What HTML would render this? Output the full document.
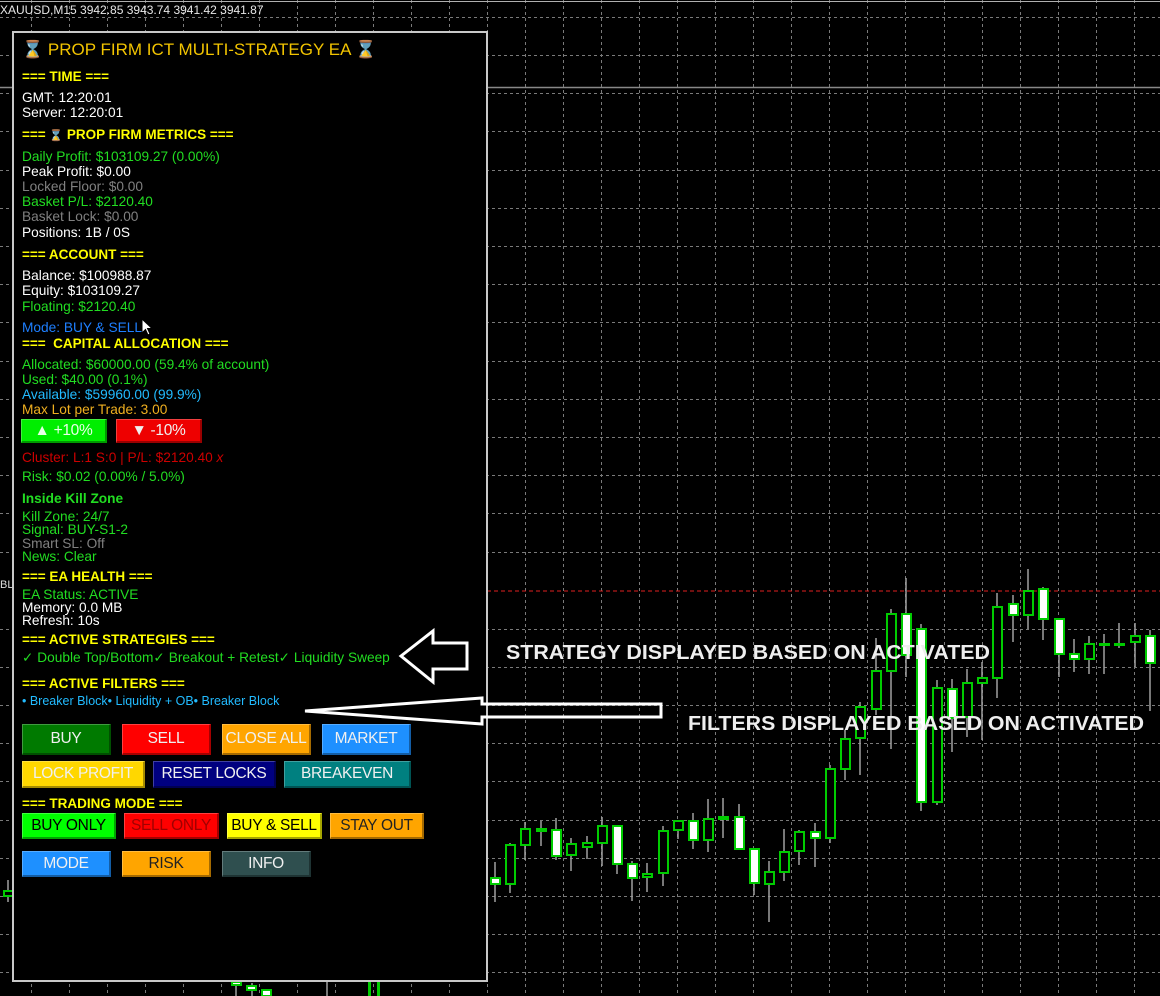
<!DOCTYPE html>
<html><head><meta charset="utf-8"><style>
*{margin:0;padding:0;box-sizing:border-box}
body{width:1160px;height:996px;background:#000;position:relative;overflow:hidden;font-family:"Liberation Sans",Arial,sans-serif}
svg.bg{position:absolute;left:0;top:0}
#panel{position:absolute;left:12px;top:31px;width:476px;height:951px;background:#000;border:2px solid #c8c8c8}
.t{position:absolute;left:22px;font-size:13.7px;line-height:15px;white-space:nowrap;color:#fff}
.h{font-weight:bold;color:#ffff00;font-size:13.5px}
.g{color:#22dd22}.w{color:#fff}.gr{color:#808080}.b{color:#1e7fff}.c{color:#22bbff}.o{color:#f0b020}.r{color:#cc0000}
.btn{position:absolute;display:flex;align-items:center;justify-content:center;font-size:15.5px;color:#f0f0f0;border-bottom:2px solid rgba(0,0,0,.35);border-right:2px solid rgba(0,0,0,.35);border-top:1px solid rgba(255,255,255,.25);border-left:1px solid rgba(255,255,255,.25);white-space:nowrap;letter-spacing:-0.3px}
</style></head><body>
<svg class="bg" width="1160" height="996" xmlns="http://www.w3.org/2000/svg">
<g stroke="#7a7a7a" stroke-width="1" stroke-dasharray="3,3" id="grid">
<line x1="525.5" y1="0" x2="525.5" y2="996"/><line x1="563.5" y1="0" x2="563.5" y2="996"/><line x1="601.5" y1="0" x2="601.5" y2="996"/><line x1="639.5" y1="0" x2="639.5" y2="996"/><line x1="677.5" y1="0" x2="677.5" y2="996"/><line x1="715.5" y1="0" x2="715.5" y2="996"/><line x1="753.5" y1="0" x2="753.5" y2="996"/><line x1="791.5" y1="0" x2="791.5" y2="996"/><line x1="829.5" y1="0" x2="829.5" y2="996"/><line x1="867.5" y1="0" x2="867.5" y2="996"/><line x1="905.5" y1="0" x2="905.5" y2="996"/><line x1="944.5" y1="0" x2="944.5" y2="996"/><line x1="982.5" y1="0" x2="982.5" y2="996"/><line x1="1020.5" y1="0" x2="1020.5" y2="996"/><line x1="1058.5" y1="0" x2="1058.5" y2="996"/><line x1="1096.5" y1="0" x2="1096.5" y2="996"/><line x1="1134.5" y1="0" x2="1134.5" y2="996"/>
<line x1="487.5" y1="0" x2="487.5" y2="996"/><line x1="449.5" y1="0" x2="449.5" y2="996"/><line x1="411.5" y1="0" x2="411.5" y2="996"/><line x1="373.5" y1="0" x2="373.5" y2="996"/><line x1="335.5" y1="0" x2="335.5" y2="996"/><line x1="297.5" y1="0" x2="297.5" y2="996"/><line x1="259.5" y1="0" x2="259.5" y2="996"/><line x1="221.5" y1="0" x2="221.5" y2="996"/><line x1="183.5" y1="0" x2="183.5" y2="996"/><line x1="145.5" y1="0" x2="145.5" y2="996"/><line x1="107.5" y1="0" x2="107.5" y2="996"/><line x1="69.5" y1="0" x2="69.5" y2="996"/><line x1="31.5" y1="0" x2="31.5" y2="996"/>
<line x1="0" y1="17.5" x2="1160" y2="17.5"/><line x1="0" y1="55.5" x2="1160" y2="55.5"/><line x1="0" y1="93.5" x2="1160" y2="93.5"/><line x1="0" y1="131.5" x2="1160" y2="131.5"/><line x1="0" y1="170.5" x2="1160" y2="170.5"/><line x1="0" y1="208.5" x2="1160" y2="208.5"/><line x1="0" y1="246.5" x2="1160" y2="246.5"/><line x1="0" y1="284.5" x2="1160" y2="284.5"/><line x1="0" y1="322.5" x2="1160" y2="322.5"/><line x1="0" y1="361.5" x2="1160" y2="361.5"/><line x1="0" y1="399.5" x2="1160" y2="399.5"/><line x1="0" y1="437.5" x2="1160" y2="437.5"/><line x1="0" y1="475.5" x2="1160" y2="475.5"/><line x1="0" y1="513.5" x2="1160" y2="513.5"/><line x1="0" y1="552.5" x2="1160" y2="552.5"/><line x1="0" y1="629.5" x2="1160" y2="629.5"/><line x1="0" y1="667.5" x2="1160" y2="667.5"/><line x1="0" y1="705.5" x2="1160" y2="705.5"/><line x1="0" y1="743.5" x2="1160" y2="743.5"/><line x1="0" y1="781.5" x2="1160" y2="781.5"/><line x1="0" y1="820.5" x2="1160" y2="820.5"/><line x1="0" y1="858.5" x2="1160" y2="858.5"/><line x1="0" y1="896.5" x2="1160" y2="896.5"/><line x1="0" y1="934.5" x2="1160" y2="934.5"/><line x1="0" y1="972.5" x2="1160" y2="972.5"/>
</g>
<line x1="0" y1="1.5" x2="1160" y2="1.5" stroke="#b0b0b0"/>
<line x1="0" y1="87.5" x2="1160" y2="87.5" stroke="#888" stroke-width="1.5"/>
<line x1="487" y1="591" x2="1160" y2="591" stroke="#e02020" stroke-dasharray="4,3"/>
<text x="0" y="14" fill="#e8e8e8" font-size="12" font-family="Liberation Sans">XAUUSD,M15  3942.85 3943.74 3941.42 3941.87</text>
<text x="0" y="588" fill="#ddd" font-size="11" font-family="Liberation Sans">BL</text>
<g stroke="#a0a0a0" stroke-width="1.5">
<line x1="495" y1="862" x2="495" y2="902"/><line x1="510" y1="843" x2="510" y2="893"/><line x1="525" y1="822" x2="525" y2="860"/><line x1="541" y1="821" x2="541" y2="846"/><line x1="556" y1="818" x2="556" y2="860"/><line x1="571" y1="838" x2="571" y2="871"/><line x1="587" y1="836" x2="587" y2="859"/><line x1="602" y1="817" x2="602" y2="866"/><line x1="617" y1="825" x2="617" y2="874"/><line x1="632" y1="861" x2="632" y2="901"/><line x1="647" y1="863" x2="647" y2="892"/><line x1="663" y1="826" x2="663" y2="886"/><line x1="678" y1="821" x2="678" y2="839"/><line x1="693" y1="813" x2="693" y2="849"/><line x1="708" y1="799" x2="708" y2="852"/><line x1="723" y1="798" x2="723" y2="838"/><line x1="739" y1="804" x2="739" y2="850"/><line x1="754" y1="849" x2="754" y2="895"/><line x1="769" y1="861" x2="769" y2="922"/><line x1="784" y1="829" x2="784" y2="881"/><line x1="799" y1="830" x2="799" y2="865"/><line x1="815" y1="823" x2="815" y2="867"/><line x1="830" y1="765" x2="830" y2="843"/><line x1="845" y1="730" x2="845" y2="780"/><line x1="860" y1="702" x2="860" y2="775"/><line x1="876" y1="638" x2="876" y2="715"/><line x1="891" y1="609" x2="891" y2="749"/><line x1="906" y1="578" x2="906" y2="677"/><line x1="921" y1="624" x2="921" y2="811"/><line x1="937" y1="680" x2="937" y2="805"/><line x1="952" y1="679" x2="952" y2="752"/><line x1="967" y1="669" x2="967" y2="737"/><line x1="982" y1="662" x2="982" y2="740"/><line x1="997" y1="593" x2="997" y2="698"/><line x1="1013" y1="595" x2="1013" y2="642"/><line x1="1028" y1="569" x2="1028" y2="629"/><line x1="1043" y1="587" x2="1043" y2="640"/><line x1="1059" y1="619" x2="1059" y2="677"/><line x1="1074" y1="639" x2="1074" y2="672"/><line x1="1089" y1="636" x2="1089" y2="674"/><line x1="1104" y1="634" x2="1104" y2="674"/><line x1="1119" y1="623" x2="1119" y2="648"/><line x1="1135" y1="623" x2="1135" y2="667"/><line x1="1150" y1="630" x2="1150" y2="711"/>
<line x1="236" y1="983" x2="236" y2="996"/><line x1="252" y1="983" x2="252" y2="996"/><line x1="327" y1="982" x2="327" y2="996"/>
<line x1="8" y1="880" x2="8" y2="902"/>
</g>
<g stroke="#00cc00" stroke-width="2" fill="#000">
<rect x="506" y="845" width="9" height="39"/><rect x="521" y="829" width="9" height="16"/><rect x="567" y="844" width="9" height="11"/><rect x="583" y="843" width="9" height="4"/><rect x="598" y="826" width="9" height="17"/><rect x="643" y="874" width="9" height="3"/><rect x="659" y="831" width="9" height="42"/><rect x="674" y="821" width="9" height="9"/><rect x="704" y="819" width="9" height="21"/><rect x="719" y="817" width="9" height="2"/><rect x="765" y="872" width="9" height="12"/><rect x="780" y="852" width="9" height="20"/><rect x="795" y="832" width="9" height="19"/><rect x="826" y="769" width="9" height="69"/><rect x="841" y="739" width="9" height="30"/><rect x="856" y="707" width="9" height="31"/><rect x="872" y="671" width="9" height="38"/><rect x="887" y="614" width="9" height="57"/><rect x="933" y="688" width="9" height="114"/><rect x="963" y="683" width="9" height="34"/><rect x="978" y="678" width="9" height="5"/><rect x="993" y="607" width="9" height="71"/><rect x="1024" y="591" width="9" height="24"/><rect x="1085" y="644" width="9" height="15"/><rect x="1100" y="644" width="9" height="1"/><rect x="1115" y="644" width="9" height="1"/><rect x="1131" y="636" width="9" height="6"/>
<rect x="4" y="891" width="9" height="5"/><rect x="369" y="982" width="1" height="14"/><rect x="378" y="982" width="1" height="14"/>
</g>
<g stroke="#00cc00" stroke-width="2" fill="#fff">
<rect x="491" y="878" width="9" height="6"/><rect x="537" y="829" width="9" height="2"/><rect x="552" y="830" width="9" height="26"/><rect x="613" y="826" width="9" height="38"/><rect x="628" y="864" width="9" height="14"/><rect x="689" y="821" width="9" height="19"/><rect x="735" y="817" width="9" height="32"/><rect x="750" y="849" width="9" height="34"/><rect x="811" y="832" width="9" height="6"/><rect x="902" y="614" width="9" height="41"/><rect x="917" y="629" width="9" height="173"/><rect x="948" y="689" width="9" height="29"/><rect x="1009" y="604" width="9" height="11"/><rect x="1039" y="589" width="9" height="30"/><rect x="1055" y="619" width="9" height="35"/><rect x="1070" y="654" width="9" height="5"/><rect x="1146" y="636" width="9" height="27"/>
<rect x="232" y="982" width="9" height="3"/><rect x="247" y="986" width="9" height="4"/><rect x="262" y="990" width="9" height="6"/>
</g>
<text x="506" y="659" fill="#eeeeee" font-size="20" font-weight="bold" font-family="Liberation Sans" textLength="484" lengthAdjust="spacingAndGlyphs">STRATEGY DISPLAYED BASED ON ACTIVATED</text>
<text x="688" y="730" fill="#eeeeee" font-size="20" font-weight="bold" font-family="Liberation Sans" textLength="456" lengthAdjust="spacingAndGlyphs">FILTERS DISPLAYED BASED ON ACTIVATED</text>
</svg>
<div id="panel"></div>
<div class="t" style="left:22px;top:40px;font-size:17px;line-height:19px;color:#f2c400">⌛ PROP FIRM ICT MULTI-STRATEGY EA ⌛</div>
<div class="t h" style="top:69px">=== TIME ===</div>
<div class="t w" style="top:90px">GMT: 12:20:01</div>
<div class="t w" style="top:105px">Server: 12:20:01</div>
<div class="t h" style="top:127px">=== <span style="color:#f2c400;font-size:11px">⌛</span> PROP FIRM METRICS ===</div>
<div class="t g" style="top:149px">Daily Profit: $103109.27 (0.00%)</div>
<div class="t w" style="top:164px">Peak Profit: $0.00</div>
<div class="t gr" style="top:179px">Locked Floor: $0.00</div>
<div class="t g" style="top:194px">Basket P/L: $2120.40</div>
<div class="t gr" style="top:209px">Basket Lock: $0.00</div>
<div class="t w" style="top:225px">Positions: 1B / 0S</div>
<div class="t h" style="top:247px">=== ACCOUNT ===</div>
<div class="t w" style="top:268px">Balance: $100988.87</div>
<div class="t w" style="top:283px">Equity: $103109.27</div>
<div class="t g" style="top:299px">Floating: $2120.40</div>
<div class="t b" style="top:320px">Mode: BUY &amp; SELL</div>
<svg style="position:absolute;left:141px;top:318px" width="12" height="18"><path d="M1 1 L1 15 L4.5 11.5 L7 17 L9 16 L6.5 10.5 L11 10.5 Z" fill="#fff" stroke="#000" stroke-width="1"/></svg>
<div class="t h" style="top:336px">===&nbsp; CAPITAL ALLOCATION ===</div>
<div class="t g" style="top:357px">Allocated: $60000.00 (59.4% of account)</div>
<div class="t g" style="top:372px">Used: $40.00 (0.1%)</div>
<div class="t c" style="top:387px">Available: $59960.00 (99.9%)</div>
<div class="t o" style="top:402px">Max Lot per Trade: 3.00</div>
<div class="btn" style="left:21px;top:419px;width:86px;height:24px;background:#00ee00;color:#e8ffe8">▲ +10%</div>
<div class="btn" style="left:116px;top:419px;width:86px;height:24px;background:#ee0000">▼ -10%</div>
<div class="t r" style="top:450px">Cluster: L:1 S:0 | P/L: $2120.40 <i>x</i></div>
<div class="t g" style="top:469px">Risk: $0.02 (0.00% / 5.0%)</div>
<div class="t g" style="top:491px;font-weight:bold">Inside Kill Zone</div>
<div class="t g" style="top:509px">Kill Zone: 24/7</div>
<div class="t g" style="top:522px">Signal: BUY-S1-2</div>
<div class="t gr" style="top:536px">Smart SL: Off</div>
<div class="t g" style="top:549px">News: Clear</div>
<div class="t h" style="top:569px">=== EA HEALTH ===</div>
<div class="t g" style="top:587px">EA Status: ACTIVE</div>
<div class="t w" style="top:600px">Memory: 0.0 MB</div>
<div class="t w" style="top:613px">Refresh: 10s</div>
<div class="t h" style="top:632px">=== ACTIVE STRATEGIES ===</div>
<div class="t g" style="top:650px">✓ Double Top/Bottom✓ Breakout + Retest✓ Liquidity Sweep</div>
<div class="t h" style="top:676px">=== ACTIVE FILTERS ===</div>
<div class="t c" style="top:694px;font-size:12.5px">• Breaker Block• Liquidity + OB• Breaker Block</div>
<div class="btn" style="left:22px;top:724px;width:89px;height:31px;background:#007a00">BUY</div>
<div class="btn" style="left:122px;top:724px;width:89px;height:31px;background:#ff0000">SELL</div>
<div class="btn" style="left:222px;top:724px;width:89px;height:31px;background:#ffa500">CLOSE ALL</div>
<div class="btn" style="left:322px;top:724px;width:89px;height:31px;background:#1e90ff">MARKET</div>
<div class="btn" style="left:22px;top:761px;width:123px;height:27px;background:#ffd700">LOCK PROFIT</div>
<div class="btn" style="left:153px;top:761px;width:123px;height:27px;background:#000080">RESET LOCKS</div>
<div class="btn" style="left:284px;top:761px;width:127px;height:27px;background:#008080">BREAKEVEN</div>
<div class="t h" style="top:796px">=== TRADING MODE ===</div>
<div class="btn" style="left:22px;top:813px;width:94px;height:26px;background:#00ff00;color:#000">BUY ONLY</div>
<div class="btn" style="left:124px;top:813px;width:95px;height:26px;background:#ff0000;color:#a00000">SELL ONLY</div>
<div class="btn" style="left:227px;top:813px;width:95px;height:26px;background:#ffff00;color:#000">BUY &amp; SELL</div>
<div class="btn" style="left:330px;top:813px;width:94px;height:26px;background:#ffa500;color:#222">STAY OUT</div>
<div class="btn" style="left:22px;top:851px;width:89px;height:26px;background:#1e90ff">MODE</div>
<div class="btn" style="left:122px;top:851px;width:89px;height:26px;background:#ffa500;color:#222">RISK</div>
<div class="btn" style="left:222px;top:851px;width:89px;height:26px;background:#2f4f4f">INFO</div>
<svg style="position:absolute;left:0;top:0" width="1160" height="996">
<path d="M401 656 L433 631 L433 643 L467 643 L467 669 L433 669 L433 682 Z" fill="none" stroke="#fff" stroke-width="3" stroke-linejoin="miter"/>
<path d="M305 711 L482 698 L482 704 L661 704 L661 717 L482 717 L482 724 Z" fill="none" stroke="#fff" stroke-width="3"/>
</svg>
</body></html>
